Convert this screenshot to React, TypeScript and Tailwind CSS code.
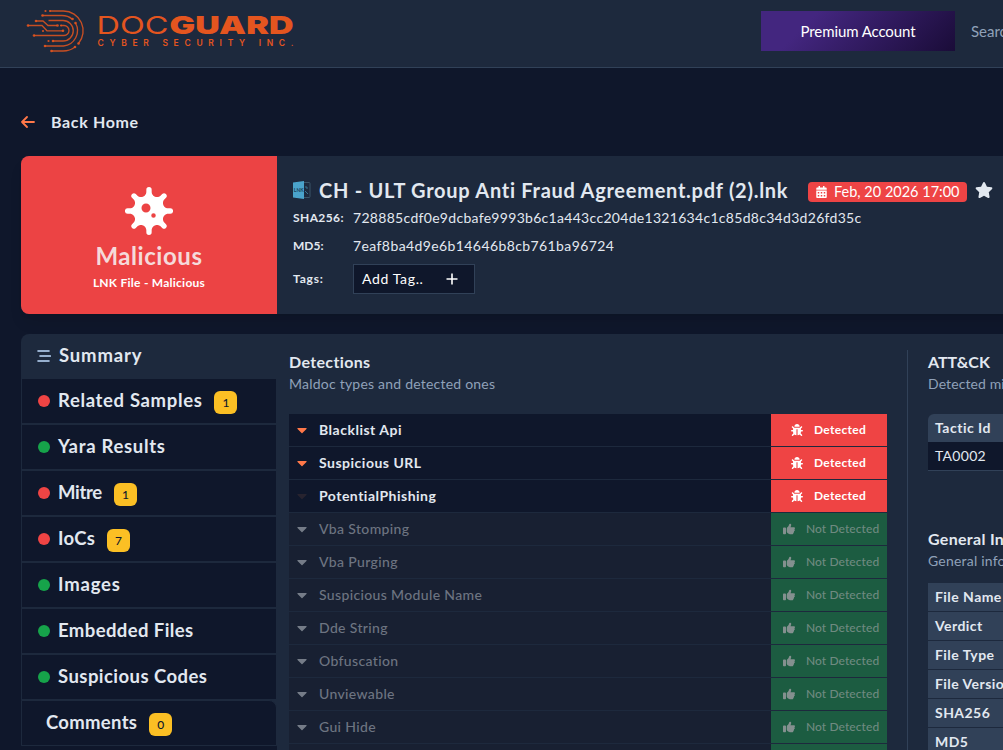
import type { ReactNode } from 'react'
import { FaVirus, FaCaretDown, FaBug, FaCalendarAlt, FaStar } from 'react-icons/fa'
import { FaThumbsUp } from 'react-icons/fa6'

const menu = [
    { label: 'Related Samples', status: 'bad', count: 1, tracking: 'tracking-[0.65px]' },
    { label: 'Yara Results', status: 'good', tracking: 'tracking-[0.7px]' },
    { label: 'Mitre', status: 'bad', count: 1, tracking: 'tracking-[-0.3px]' },
    { label: 'IoCs', status: 'bad', count: 7, tracking: 'tracking-[0.25px]' },
    { label: 'Images', status: 'good', tracking: 'tracking-[0.8px]' },
    { label: 'Embedded Files', status: 'good', tracking: 'tracking-[0.4px]' },
    { label: 'Suspicious Codes', status: 'good', tracking: 'tracking-[0.45px]' },
    { label: 'Comments', count: 0, tracking: 'tracking-[0.3px]' }
]

const detections = [
    { name: 'Blacklist Api', detected: true, caret: 'text-[#ff7849]' },
    { name: 'Suspicious URL', detected: true, caret: 'text-[#ff7849]' },
    { name: 'PotentialPhishing', detected: true, caret: 'text-[#27232f]' },
    { name: 'Vba Stomping' },
    { name: 'Vba Purging' },
    { name: 'Suspicious Module Name' },
    { name: 'Dde String' },
    { name: 'Obfuscation' },
    { name: 'Unviewable' },
    { name: 'Gui Hide' },
    { name: '' }
]

const generalInfo = ['File Name', 'Verdict', 'File Type', 'File Version', 'SHA256', 'MD5']

function Logo() {
    return (
        <svg width="270" height="46" viewBox="26 7 270 46" className="text-[#e4551f]">
            <g fill="none" stroke="currentColor" strokeWidth="1.35" opacity="0.85">
                <path d="M50 11H63.500A19.800 19.800 0 0 1 78.500 43.500" />
                <path d="M42.500 15.500H62Q68 15.500 72 19" />
                <path d="M75.500 23A15.500 15.500 0 0 1 63.500 46H45" />
                <path d="M48.500 20.500H63A10.250 10.250 0 0 1 63 41H53" />
                <path d="M28 25.500H42L47 30.800H63" />
                <path d="M36 21H43L48 25.500H57" />
                <path d="M61 25.500H64A5 5 0 0 1 64 35.500H34" />
                <path d="M51.500 51H63Q70 51 75 47" />
            </g>
            <g fill="currentColor" opacity="0.9">
                <circle cx="45.500" cy="11" r="1.100" />
                <circle cx="50" cy="11" r="1.100" />
                <circle cx="42.500" cy="15.500" r="1.300" />
                <circle cx="72.500" cy="19" r="1.300" />
                <circle cx="75.500" cy="23" r="1.300" />
                <circle cx="36" cy="21" r="1.300" />
                <circle cx="28" cy="25.500" r="1.300" />
                <circle cx="57.500" cy="25.500" r="1.300" />
                <circle cx="61" cy="25.500" r="1.100" />
                <circle cx="63" cy="30.800" r="1.300" />
                <circle cx="43" cy="31" r="1.100" />
                <circle cx="34" cy="35.500" r="1.300" />
                <circle cx="48.500" cy="41" r="1.100" />
                <circle cx="53" cy="41" r="1.300" />
                <circle cx="45" cy="46" r="1.300" />
                <circle cx="78.500" cy="43.500" r="1.300" />
                <circle cx="75" cy="47" r="1.300" />
                <circle cx="51.500" cy="51" r="1.300" />
            </g>
            <g fill="currentColor" className="font-[Inter]">
                <text x="96.500" y="33.800" fontSize="24.500" fontWeight="400" textLength="72" lengthAdjust="spacingAndGlyphs">DOC</text>
                <text x="169.500" y="33.800" fontSize="24.500" fontWeight="900" textLength="124" lengthAdjust="spacingAndGlyphs">GUARD</text>
                <text x="97.500" y="45.800" fontSize="8.500" fontWeight="600" textLength="196">CYBER SECURITY INC.</text>
            </g>
        </svg>
    )
}

function Count({ children }: { children: ReactNode }) {
    return (
        <span className="mt-[3px] flex h-[23px] w-[23px] items-center justify-center rounded-md bg-[#fbbf24] text-xs font-medium text-slate-900">
            {children}
        </span>
    )
}

function Header() {
    return (
        <header className="flex h-[68px] items-start justify-between border-b border-slate-700 bg-slate-800 pl-[26px]">
            <div className="pt-[7px]">
                <Logo />
            </div>
            <div className="flex w-[242px] shrink-0 items-center pt-[11px]">
                <button className="h-10 w-[194px] shrink-0 bg-[linear-gradient(135deg,#43267f_25%,#1a0c38)] text-[15px] tracking-[-0.1px] text-white">
                    Premium Account
                </button>
                <span className="ml-4 text-[15px] text-slate-400">Search</span>
            </div>
        </header>
    )
}

function FileCard() {
    return (
        <section className="flex h-[158px] w-[1400px] overflow-hidden rounded-lg bg-slate-800 shadow-lg">
            <div className="flex w-64 shrink-0 flex-col items-center bg-[#ec4344] pt-[31px]">
                <FaVirus className="h-12 w-12 text-white" />
                <div className="mt-[5px] text-2xl leading-8 font-bold tracking-[0.55px] text-[#f5dada]">Malicious</div>
                <div className="mt-px text-xs leading-5 font-bold tracking-[0.25px] text-white">LNK File - Malicious</div>
            </div>
            <div className="pt-5 pl-4">
                <div className="flex h-7 items-center">
                    <svg width="18" height="18" viewBox="0 0 18 18">
                        <rect x="8.500" y="1.500" width="8.500" height="15" rx="1" fill="none" stroke="#3b5568" />
                        <path d="M0 1.500L11 0V18L0 16.500Z" fill="#4aa3cb" />
                        <text x="0.800" y="11" fontSize="5" fontWeight="700" fill="#1d4258" className="font-[Lato]">LNK</text>
                        <path d="M12 6h2v2M12 10l3 3" fill="none" stroke="#3b7590" />
                    </svg>
                    <h1 className="ml-2 w-[469px] text-xl font-bold tracking-[0.73px] whitespace-nowrap text-slate-200">
                        CH - ULT Group Anti Fraud Agreement.pdf (2).lnk
                    </h1>
                    <span className="mt-1 ml-5 flex h-5 w-[159px] shrink-0 items-center rounded bg-[#ee4445] pl-2 text-[14.5px] whitespace-nowrap text-white">
                        <FaCalendarAlt className="mr-[7px] h-3 w-[11px]" />
                        Feb, 20 2026 17:00
                    </span>
                    <FaStar className="ml-2 h-4 w-[18px] shrink-0 text-slate-200" />
                </div>
                <div className="flex h-7 items-center text-slate-200">
                    <b className="w-[60px] text-xs tracking-[0.4px]">SHA256:</b>
                    <span className="text-sm tracking-[0.3px]">728885cdf0e9dcbafe9993b6c1a443cc204de1321634c1c85d8c34d3d26fd35c</span>
                </div>
                <div className="flex h-7 items-center text-slate-200">
                    <b className="w-[60px] text-xs">MD5:</b>
                    <span className="text-sm tracking-[0.4px]">7eaf8ba4d9e6b14646b8cb761ba96724</span>
                </div>
                <div className="mt-1 flex h-[30px] items-center text-slate-200">
                    <b className="w-[60px] text-xs tracking-[0.8px]">Tags:</b>
                    <button className="flex h-[30px] w-[122px] items-center border border-slate-700 bg-slate-900 pl-2 text-sm text-white">
                        <span className="w-[83px] text-left tracking-[0.65px]">Add Tag..</span>
                        <svg width="14" height="14" viewBox="0 0 14 14" stroke="currentColor" strokeWidth="1.6">
                            <path d="M7 1.500v11M1.500 7h11" />
                        </svg>
                    </button>
                </div>
            </div>
        </section>
    )
}

function Sidebar() {
    return (
        <aside className="w-64 shrink-0 text-[18.5px] font-bold text-slate-200">
            <div className="flex h-11 items-center pl-4">
                <svg width="14" height="12" viewBox="0 0 14 12" stroke="#bfdbfe" strokeWidth="1.600" strokeLinecap="round">
                    <path d="M1 1h11M3 6h10.300M1 11h11" />
                </svg>
                <span className="ml-2 tracking-[0.85px]">Summary</span>
            </div>
            {menu.map(item => (
                <div
                    key={item.label}
                    className={`flex h-[46px] items-center border border-slate-800 bg-slate-900 ${item.status ? 'pl-4' : 'rounded-tr-lg pl-6'}`}
                >
                    {item.status && (
                        <span className={`mr-2 h-3 w-3 rounded-full ${item.status === 'bad' ? 'bg-[#ef4444]' : 'bg-[#16a34a]'}`} />
                    )}
                    <span className={item.tracking}>{item.label}</span>
                    {item.count !== undefined && (
                        <span className="ml-3">
                            <Count>{item.count}</Count>
                        </span>
                    )}
                </div>
            ))}
            <div className="h-10 bg-slate-900" />
        </aside>
    )
}

function Detections() {
    return (
        <div className="ml-3 w-[598px] shrink-0 pt-4">
            <h2 className="text-base leading-6 font-bold tracking-[0.35px] text-slate-200">Detections</h2>
            <p className="text-sm leading-5 tracking-[0.22px] text-slate-400">Maldoc types and detected ones</p>
            <div className="mt-5 text-sm">
                {detections.map(d => (
                    <div
                        key={d.name}
                        className={`flex h-[33px] items-stretch border-b border-slate-800 ${d.detected ? 'bg-slate-900' : 'bg-[#182032]'}`}
                    >
                        <div className="flex flex-1 items-center pl-[7px]">
                            <FaCaretDown className={`h-4 w-3 ${d.detected ? d.caret : 'text-[#757c88]'}`} />
                            <span className={`ml-[11px] ${d.detected ? 'font-bold tracking-[0.5px] text-slate-200' : 'font-medium tracking-[0.35px] text-[#6d7481]'}`}>
                                {d.name}
                            </span>
                        </div>
                        {d.detected ? (
                            <div className="flex w-[116px] items-center bg-[#ef4444] pl-5 text-xs font-bold text-white">
                                <FaBug className="h-3 w-3" />
                                <span className="ml-[11px] tracking-[0.3px]">Detected</span>
                            </div>
                        ) : (
                            <div className="flex w-[116px] items-center bg-[#1c5c41] pl-3 text-xs font-medium whitespace-nowrap text-[#6f8a80]">
                                <FaThumbsUp className="h-3 w-3 text-[#84908f]" />
                                {d.name && <span className="ml-[11px] tracking-[0.08px]">Not Detected</span>}
                            </div>
                        )}
                    </div>
                ))}
            </div>
        </div>
    )
}

function Details() {
    return (
        <div className="mt-4 ml-5 w-[400px] shrink-0 border-l border-slate-700 pl-5 text-sm">
            <h2 className="text-base leading-6 font-bold text-slate-200">ATT&amp;CK</h2>
            <p className="leading-5 tracking-[0.1px] whitespace-nowrap text-slate-400">Detected mitre attack techniques</p>
            <div className="mt-5 text-slate-200">
                <div className="flex h-7 items-center rounded-t-md bg-slate-700 pl-[7px] font-bold tracking-[0.5px]">Tactic Id</div>
                <div className="flex h-[29px] items-center border-b border-slate-700 bg-slate-900 pl-[7px] tracking-[0.3px]">TA0002</div>
            </div>
            <h2 className="mt-14 text-base leading-6 font-bold tracking-[0.3px] text-slate-200">General Information</h2>
            <p className="leading-5 tracking-[0.2px] text-slate-400">General information about file</p>
            <div className="mt-3">
                {generalInfo.map(label => (
                    <div key={label} className="flex h-[29px] items-center border-b border-slate-800 bg-slate-700 pl-[7px] font-bold tracking-[0.45px] text-slate-200">
                        {label}
                    </div>
                ))}
            </div>
        </div>
    )
}

export default function App() {
    return (
        <div className="h-[750px] w-full overflow-hidden bg-slate-900 font-[Lato,sans-serif]">
            <Header />
            <main className="pl-[21px]">
                <a className="flex h-[88px] items-center pt-5 font-bold text-slate-200">
                    <svg width="14" height="12" viewBox="0 0 14 12" fill="none" stroke="#ff7849" strokeWidth="1.800" strokeLinecap="round" strokeLinejoin="round">
                        <path d="M13 6H1M6 1L1 6l5 5" />
                    </svg>
                    <span className="ml-4 tracking-[0.65px]">Back Home</span>
                </a>
                <FileCard />
                <section className="mt-5 flex h-[440px] w-[1400px] overflow-hidden rounded-t-lg bg-slate-800">
                    <Sidebar />
                    <Detections />
                    <Details />
                </section>
            </main>
        </div>
    )
}
